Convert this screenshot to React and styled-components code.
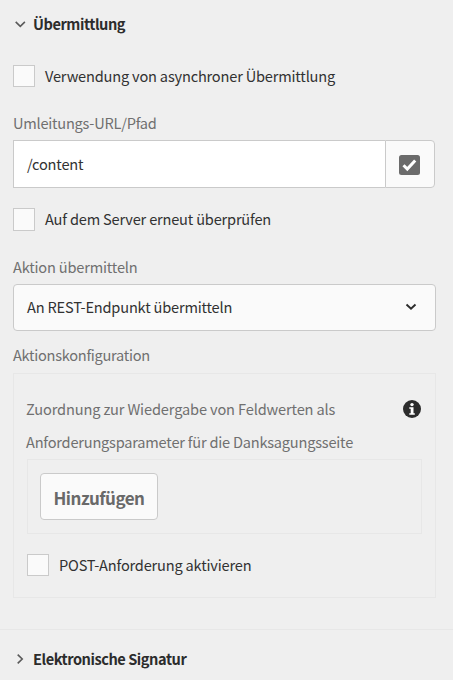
import React from 'react';
import styled, { createGlobalStyle } from 'styled-components';

const GlobalStyle = createGlobalStyle`
  *, *::before, *::after { box-sizing: border-box; }
  html, body { margin: 0; background: #efefef; }
  body {
    font-family: "Noto Sans CJK SC", "Noto Sans", sans-serif;
    font-size: 14.6px;
    line-height: 22px;
    letter-spacing: -0.19px;
    color: #323232;
    overflow: hidden;
  }
`;

const Panel = styled.main`
  width: 453px;
  height: 680px;
  background: #efefef;
  display: flex;
  flex-direction: column;
  white-space: nowrap;
`;

const SectionHeader = styled.h3`
  margin: 0;
  display: flex;
  flex: none;
  align-items: center;
  gap: 7px;
  height: 47px;
  padding-left: 14px;
  font-size: 14.6px;
  font-weight: 700;
  letter-spacing: -0.46px;
  color: #2c2c2c;

  svg { flex: none; }
`;

const SectionBody = styled.div`
  display: flex;
  flex: none;
  flex-direction: column;
  padding: 18px 17px 31px 13px;
`;

const CheckRow = styled.label`
  display: flex;
  align-items: center;
  gap: 10px;
  height: 22px;
`;

const Box = styled.span`
  width: 22px;
  height: ${p => p.$height || 22}px;
  flex: none;
  background: #fafafa;
  border: 1px solid #cacaca;
`;

const FieldLabel = styled.div`
  height: 22px;
  margin-top: ${p => p.$top}px;
  letter-spacing: ${p => p.$spacing || -0.19}px;
  color: #707070;
`;

const InputGroup = styled.div`
  display: flex;
  width: 422px;
  height: 48px;
  margin: 6px 0 20px;
`;

const Input = styled.div`
  flex: 1;
  display: flex;
  align-items: center;
  padding-left: 13px;
  background: #fff;
  border: 1px solid #cacaca;
  border-right: 0;
`;

const InputButton = styled.button`
  width: 50px;
  padding: 2px 1px 0 0;
  display: flex;
  align-items: center;
  justify-content: center;
  background: #fafafa;
  border: 1px solid #cacaca;
  border-radius: 0 4px 4px 0;
`;

const Select = styled.div`
  display: flex;
  align-items: center;
  justify-content: space-between;
  height: 47px;
  margin-top: 6px;
  padding: 0 18px 1px 13px;
  background: #fafafa;
  border: 1px solid #cacaca;
  border-radius: 4px;
`;

const Well = styled.section`
  height: 225px;
  margin-top: 7px;
  padding: 18px 13px 0;
  border: 1px solid #e7e7e7;
`;

const Description = styled.div`
  display: flex;
  justify-content: space-between;
  align-items: flex-start;
  height: 67px;
  color: #707070;
`;

const DescriptionText = styled.p`
  margin: 0 0 0 -1px;
  line-height: 33px;
`;

const Line = styled.span`
  display: block;
  letter-spacing: ${p => p.$spacing}px;
`;

const InfoIcon = styled.svg`
  flex: none;
  margin: 8px 1px 0 0;
`;

const MultiField = styled.div`
  height: 75px;
  margin-bottom: 20px;
  padding: 13px 12px;
  border: 1px solid #e7e7e7;
`;

const AddButton = styled.button`
  width: 118px;
  height: 47px;
  padding: 3px 0 0;
  background: #fafafa;
  border: 1px solid #cacaca;
  border-radius: 4px;
  color: #696969;
  font: 700 17px/24px "Noto Sans CJK SC", "Noto Sans", sans-serif;
  letter-spacing: -0.5px;
`;

const NextSection = styled.section`
  flex: none;
  border-top: 1px solid #e7e7e7;
  padding-top: 5px;
`;

const Chevron = ({ right }) => (
  <svg width="12" height="12" viewBox="0 0 12 12" fill="none" stroke="#5a5a5a" strokeWidth="1.6">
    <path d={right ? 'M3.7 1.7 8.2 6 3.7 10.3' : 'M1.7 3.9 6.3 8.3 10.9 3.9'} />
  </svg>
);

export default function App() {
  return (
    <>
      <GlobalStyle />
      <Panel>
        <SectionHeader><Chevron />Übermittlung</SectionHeader>
        <SectionBody>
          <CheckRow><Box />Verwendung von asynchroner Übermittlung</CheckRow>
          <FieldLabel $top={25} $spacing={-0.24}>Umleitungs-URL/Pfad</FieldLabel>
          <InputGroup>
            <Input>/content</Input>
            <InputButton aria-label="Pfad auswählen">
              <svg width="21" height="20" viewBox="0 0 21 20">
                <rect width="21" height="20" rx="2.5" fill="#6b6b6b" />
                <path d="M4.5 10.2 8.3 14 16.2 5.4" fill="none" stroke="#fff" strokeWidth="3" />
              </svg>
            </InputButton>
          </InputGroup>
          <CheckRow><Box $height={23} />Auf dem Server erneut überprüfen</CheckRow>
          <FieldLabel $top={26}>Aktion übermitteln</FieldLabel>
          <Select>
            An REST-Endpunkt übermitteln
            <svg width="12" height="12" viewBox="0 0 12 12" fill="none" stroke="#2c2c2c" strokeWidth="1.9">
              <path d="M1.5 3.5 6 7.8 10.5 3.5" />
            </svg>
          </Select>
          <FieldLabel $top={13} $spacing={-0.28}>Aktionskonfiguration</FieldLabel>
          <Well>
            <Description>
              <DescriptionText>
                <Line $spacing={-0.14}>Zuordnung zur Wiedergabe von Feldwerten als</Line>
                <Line $spacing={-0.22}>Anforderungsparameter für die Danksagungsseite</Line>
              </DescriptionText>
              <InfoIcon width="18" height="18" viewBox="0 0 18 18">
                <circle cx="9" cy="9" r="9" fill="#2c2c2c" />
                <circle cx="9" cy="4.6" r="1.7" fill="#fff" />
                <path d="M6.3 7.3h4.2v5.9h1.3v1.5H6.3v-1.5h1.4V8.8H6.3z" fill="#fff" />
              </InfoIcon>
            </Description>
            <MultiField><AddButton>Hinzufügen</AddButton></MultiField>
            <CheckRow><Box />POST-Anforderung aktivieren</CheckRow>
          </Well>
        </SectionBody>
        <NextSection>
          <SectionHeader><Chevron right />Elektronische Signatur</SectionHeader>
        </NextSection>
      </Panel>
    </>
  );
}
